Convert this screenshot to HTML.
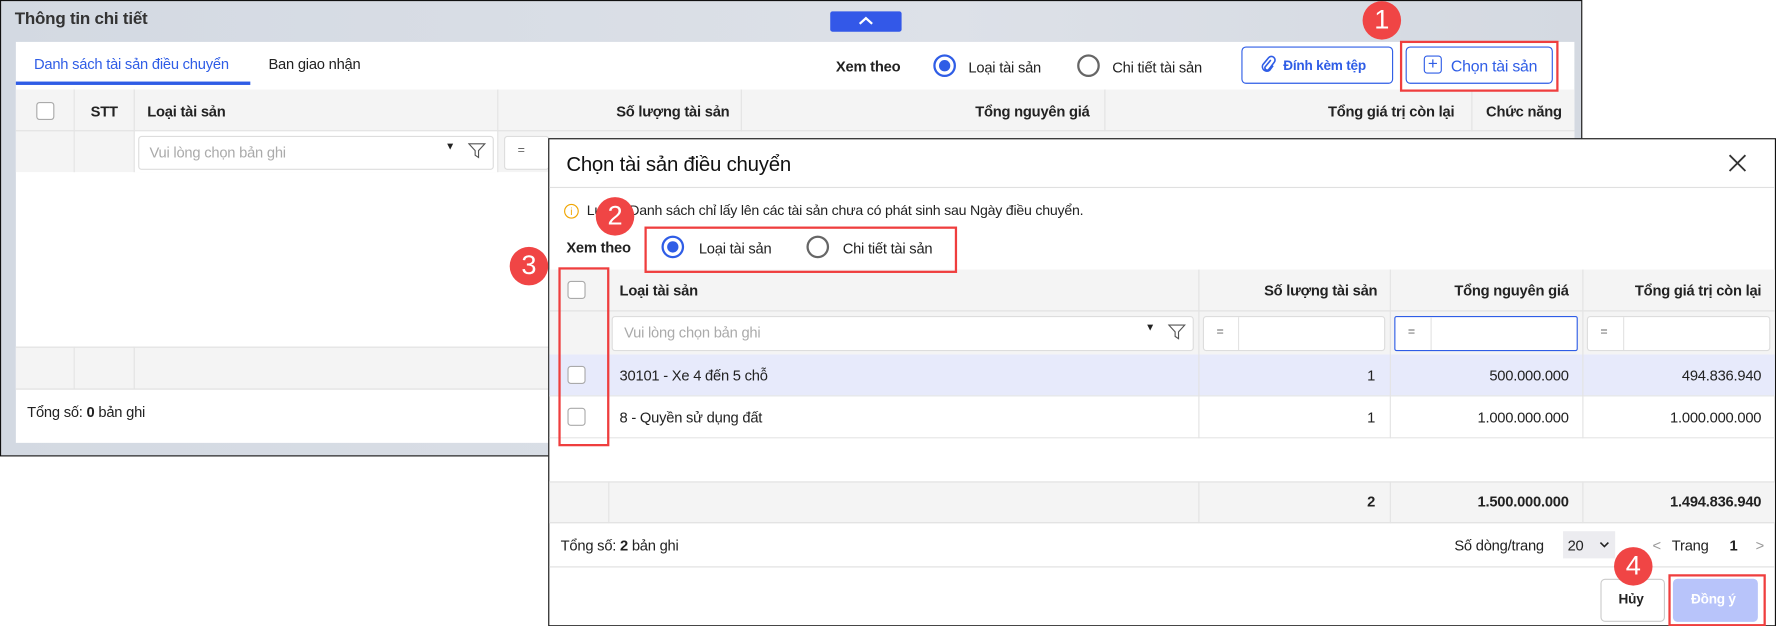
<!DOCTYPE html>
<html><head><meta charset="utf-8">
<style>
html,body{margin:0;padding:0;background:#fff;width:1776px;height:626px;overflow:hidden}
#s{position:absolute;left:0;top:0;width:1568px;height:553px;transform:scale(1.13265);transform-origin:0 0;font-family:"Liberation Sans",sans-serif;font-size:13px;color:#222}
.a{position:absolute;box-sizing:border-box}
.t{position:absolute;white-space:nowrap;letter-spacing:-0.2px}
.b{font-weight:bold}
.cb{position:absolute;width:16px;height:16px;border:1px solid #aaa;border-radius:3px;background:#fff;box-sizing:border-box}
.badge{position:absolute;width:34px;height:34px;border-radius:50%;background:#f04545;color:#fff;font-size:24px;text-align:center;line-height:34px;z-index:6}
.red{position:absolute;border:2px solid #ef3e3e;box-sizing:border-box;z-index:5}
.radio{position:absolute;width:20px;height:20px;border-radius:50%;border:2px solid #666;box-sizing:border-box;background:#fff}
.radio.on{border-color:#2f5de6}
.radio.on:after{content:"";position:absolute;left:3px;top:3px;width:10px;height:10px;border-radius:50%;background:#2f5de6}
.vl{position:absolute;width:1px;background:#e3e3e3}
.hl{position:absolute;height:1px;background:#e0e0e0}
.r{text-align:right}
</style></head><body><div id="s">
<!-- Outer panel -->
<div class="a" style="left:0;top:0;width:1397px;height:403px;border:1px solid #111;background:linear-gradient(90deg,#d3d9e2,#dde1e8 60%,#d4d9e1)"></div>
<div class="t b" style="left:13px;top:8px;font-size:15px;color:#333">Thông tin chi tiết</div>
<div class="a" style="left:733px;top:10px;width:63px;height:18px;background:#3358e8;border-radius:2px"><svg width="63" height="18"><path d="M26 11 L31.5 6 L37 11" stroke="#fff" stroke-width="2" fill="none"/></svg></div>
<div class="a" style="left:14px;top:37px;width:1376px;height:354px;background:#fff"></div>
<div class="t" style="left:30px;top:49px;color:#2f5de6">Danh sách tài sản điều chuyển</div>
<div class="a" style="left:14px;top:72px;width:207px;height:3px;background:#2f5de6"></div>
<div class="t" style="left:237px;top:49px">Ban giao nhận</div>
<div class="t b" style="left:738px;top:51px">Xem theo</div>
<div class="radio on" style="left:824px;top:48px"></div>
<div class="t" style="left:855px;top:52px">Loại tài sản</div>
<div class="radio" style="left:951px;top:48px"></div>
<div class="t" style="left:982px;top:52px">Chi tiết tài sản</div>
<div class="a" style="left:1096px;top:41px;width:134px;height:33px;border:1px solid #2f5de6;border-radius:4px"></div>
<svg class="a" style="left:1113px;top:49px" width="14" height="16"><path d="M9 4 L4 10 a2 2 0 0 0 3 2.5 L12 6 a3.2 3.2 0 0 0 -5 -4 L2 8 a4 4 0 0 0 6 5 L11 9" stroke="#2f5de6" stroke-width="1.4" fill="none"/></svg>
<div class="t b" style="left:1133px;top:51px;color:#2f5de6;font-size:12px">Đính kèm tệp</div>
<div class="a" style="left:1241px;top:41px;width:130px;height:33px;border:1px solid #2f5de6;border-radius:4px"></div>
<div class="a" style="left:1257px;top:49px;width:16px;height:16px;border:1.5px solid #2f5de6;border-radius:3px;color:#2f5de6;text-align:center;line-height:13px;font-size:15px">+</div>
<div class="t" style="left:1281px;top:50px;color:#2f5de6;font-size:14px">Chọn tài sản</div>
<div class="red" style="left:1236px;top:36px;width:140px;height:45px"></div>
<div class="badge" style="left:1203px;top:1px">1</div>
<!-- outer table -->
<div class="a" style="left:14px;top:79px;width:1376px;height:37px;background:#f4f4f4;border-bottom:1px solid #e0e0e0"></div>
<div class="a" style="left:14px;top:116px;width:1376px;height:36px;background:#f4f4f4"></div>
<div class="a" style="left:119px;top:116px;width:320px;height:36px;background:#fff"></div>
<div class="vl" style="left:65px;top:79px;height:73px"></div>
<div class="vl" style="left:118px;top:79px;height:73px"></div>
<div class="vl" style="left:439px;top:79px;height:73px"></div>
<div class="vl" style="left:654px;top:79px;height:37px"></div>
<div class="vl" style="left:975px;top:79px;height:37px"></div>
<div class="vl" style="left:1299px;top:79px;height:37px"></div>
<div class="cb" style="left:32px;top:90px"></div>
<div class="t b" style="left:80px;top:91px">STT</div>
<div class="t b" style="left:130px;top:91px">Loại tài sản</div>
<div class="t b r" style="right:924px;top:91px">Số lượng tài sản</div>
<div class="t b r" style="right:606px;top:91px">Tổng nguyên giá</div>
<div class="t b r" style="right:284px;top:91px">Tổng giá trị còn lại</div>
<div class="t b" style="left:1312px;top:91px">Chức năng</div>
<div class="a" style="left:122px;top:120px;width:314px;height:30px;border:1px solid #ddd;border-radius:3px"></div>
<div class="t" style="left:132px;top:127px;color:#aaa">Vui lòng chọn bản ghi</div>
<div class="t" style="left:393px;top:124px;font-size:9px">▼</div>
<svg class="a" style="left:413px;top:126px" width="16" height="14"><path d="M1 1 H15 L9.5 7 V13 L6.5 11 V7 Z" stroke="#555" fill="none"/></svg>
<div class="a" style="left:445px;top:120px;width:40px;height:30px;border:1px solid #ddd;background:#fff;border-radius:3px"></div>
<div class="t" style="left:457px;top:127px;font-size:11px;color:#666">=</div>
<div class="a" style="left:14px;top:306px;width:1376px;height:38px;background:#f4f4f4;border-top:1px solid #e0e0e0;border-bottom:1px solid #e0e0e0"></div>
<div class="vl" style="left:65px;top:306px;height:38px"></div>
<div class="vl" style="left:118px;top:306px;height:38px"></div>
<div class="t" style="left:24px;top:356px">Tổng số: <b>0</b> bản ghi</div>
<!-- Dialog -->
<div class="a" style="left:484px;top:122px;width:1084px;height:431px;background:#fff;border:1px solid #111"></div>
<div class="t" style="left:500px;top:135px;font-size:18px;color:#111">Chọn tài sản điều chuyển</div>
<svg class="a" style="left:1526px;top:136px" width="16" height="16"><path d="M1 1 L15 15 M15 1 L1 15" stroke="#333" stroke-width="1.6"/></svg>
<div class="hl" style="left:485px;top:165px;width:1082px"></div>
<div class="a" style="left:498px;top:180px;width:13px;height:13px;border:1px solid #f0a500;border-radius:50%;color:#f0a500;font-size:9px;text-align:center;line-height:12px">i</div>
<div class="t" style="left:518px;top:179px;font-size:12.5px">Lưu ý: Danh sách chỉ lấy lên các tài sản chưa có phát sinh sau Ngày điều chuyển.</div>
<div class="t b" style="left:500px;top:211px">Xem theo</div>
<div class="radio on" style="left:584px;top:208px"></div>
<div class="t" style="left:617px;top:212px">Loại tài sản</div>
<div class="radio" style="left:712px;top:208px"></div>
<div class="t" style="left:744px;top:212px">Chi tiết tài sản</div>
<div class="red" style="left:569px;top:200px;width:276px;height:41px"></div>
<div class="badge" style="left:526px;top:174px">2</div>
<!-- dialog table -->
<div class="a" style="left:485px;top:238px;width:1082px;height:37px;background:#f4f4f4;border-bottom:1px solid #e0e0e0"></div>
<div class="a" style="left:485px;top:275px;width:1082px;height:38px;background:#f4f4f4"></div>
<div class="a" style="left:485px;top:313px;width:1082px;height:37px;background:#e7eafb;border-bottom:1px solid #e6e6e6"></div>
<div class="a" style="left:485px;top:350px;width:1082px;height:37px;border-bottom:1px solid #e6e6e6"></div>
<div class="a" style="left:485px;top:425px;width:1082px;height:37px;background:#f4f4f4;border-top:1px solid #e0e0e0;border-bottom:1px solid #e0e0e0"></div>
<div class="vl" style="left:537px;top:238px;height:149px"></div>
<div class="vl" style="left:537px;top:425px;height:37px"></div>
<div class="vl" style="left:1058px;top:238px;height:149px"></div>
<div class="vl" style="left:1227px;top:238px;height:149px"></div>
<div class="vl" style="left:1397px;top:238px;height:149px"></div>
<div class="vl" style="left:1058px;top:425px;height:37px"></div>
<div class="vl" style="left:1227px;top:425px;height:37px"></div>
<div class="vl" style="left:1397px;top:425px;height:37px"></div>
<div class="cb" style="left:501px;top:248px"></div>
<div class="t b" style="left:547px;top:249px">Loại tài sản</div>
<div class="t b r" style="right:352px;top:249px">Số lượng tài sản</div>
<div class="t b r" style="right:183px;top:249px">Tổng nguyên giá</div>
<div class="t b r" style="right:13px;top:249px">Tổng giá trị còn lại</div>
<div class="a" style="left:540px;top:279px;width:514px;height:31px;border:1px solid #ddd;background:#fff;border-radius:3px"></div>
<div class="t" style="left:551px;top:286px;color:#aaa">Vui lòng chọn bản ghi</div>
<div class="t" style="left:1011px;top:284px;font-size:9px">▼</div>
<svg class="a" style="left:1031px;top:286px" width="16" height="14"><path d="M1 1 H15 L9.5 7 V13 L6.5 11 V7 Z" stroke="#555" fill="none"/></svg>
<div class="a" style="left:1062px;top:279px;width:161px;height:31px;border:1px solid #ddd;background:#fff;border-radius:3px"></div>
<div class="vl" style="left:1093px;top:280px;height:29px"></div>
<div class="t" style="left:1074px;top:287px;font-size:11px;color:#666">=</div>
<div class="a" style="left:1231px;top:279px;width:162px;height:31px;border:1px solid #2f5de6;background:#fff;border-radius:2px"></div>
<div class="vl" style="left:1263px;top:280px;height:29px"></div>
<div class="t" style="left:1243px;top:287px;font-size:11px;color:#666">=</div>
<div class="a" style="left:1401px;top:279px;width:162px;height:31px;border:1px solid #ddd;background:#fff;border-radius:3px"></div>
<div class="vl" style="left:1433px;top:280px;height:29px"></div>
<div class="t" style="left:1413px;top:287px;font-size:11px;color:#666">=</div>
<div class="cb" style="left:501px;top:323px"></div>
<div class="t" style="left:547px;top:324px">30101 - Xe 4 đến 5 chỗ</div>
<div class="t r" style="right:354px;top:324px">1</div>
<div class="t r" style="right:183px;top:324px">500.000.000</div>
<div class="t r" style="right:13px;top:324px">494.836.940</div>
<div class="cb" style="left:501px;top:360px"></div>
<div class="t" style="left:547px;top:361px">8 - Quyền sử dụng đất</div>
<div class="t r" style="right:354px;top:361px">1</div>
<div class="t r" style="right:183px;top:361px">1.000.000.000</div>
<div class="t r" style="right:13px;top:361px">1.000.000.000</div>
<div class="t b r" style="right:354px;top:435px">2</div>
<div class="t b r" style="right:183px;top:435px">1.500.000.000</div>
<div class="t b r" style="right:13px;top:435px">1.494.836.940</div>
<div class="red" style="left:493px;top:236px;width:45px;height:158px"></div>
<div class="badge" style="left:450px;top:218px">3</div>
<div class="t" style="left:495px;top:474px">Tổng số: <b>2</b> bản ghi</div>
<div class="t" style="left:1284px;top:474px">Số dòng/trang</div>
<div class="a" style="left:1380px;top:469px;width:46px;height:24px;background:#ececf0"></div>
<div class="t" style="left:1384px;top:474px">20</div>
<svg class="a" style="left:1412px;top:478px" width="9" height="6"><path d="M1 1 L4.5 4.5 L8 1" stroke="#222" stroke-width="1.4" fill="none"/></svg>
<div class="t" style="left:1459px;top:474px;color:#999">&lt;</div>
<div class="t" style="left:1476px;top:474px">Trang</div>
<div class="t b" style="left:1527px;top:474px">1</div>
<div class="t" style="left:1550px;top:474px;color:#999">&gt;</div>
<div class="hl" style="left:485px;top:500px;width:1082px"></div>
<div class="a" style="left:1413px;top:511px;width:57px;height:38px;border:1px solid #ccc;border-radius:4px;background:#fff"></div>
<div class="t b" style="left:1429px;top:522px;font-size:12px">Hủy</div>
<div class="a" style="left:1477px;top:511px;width:75px;height:38px;background:#b8c4fa;border-radius:4px"></div>
<div class="t b" style="left:1493px;top:522px;font-size:12px;color:#fff">Đồng ý</div>
<div class="red" style="left:1473px;top:507px;width:86px;height:46px"></div>
<div class="badge" style="left:1425px;top:483px">4</div>
</div></body></html>
